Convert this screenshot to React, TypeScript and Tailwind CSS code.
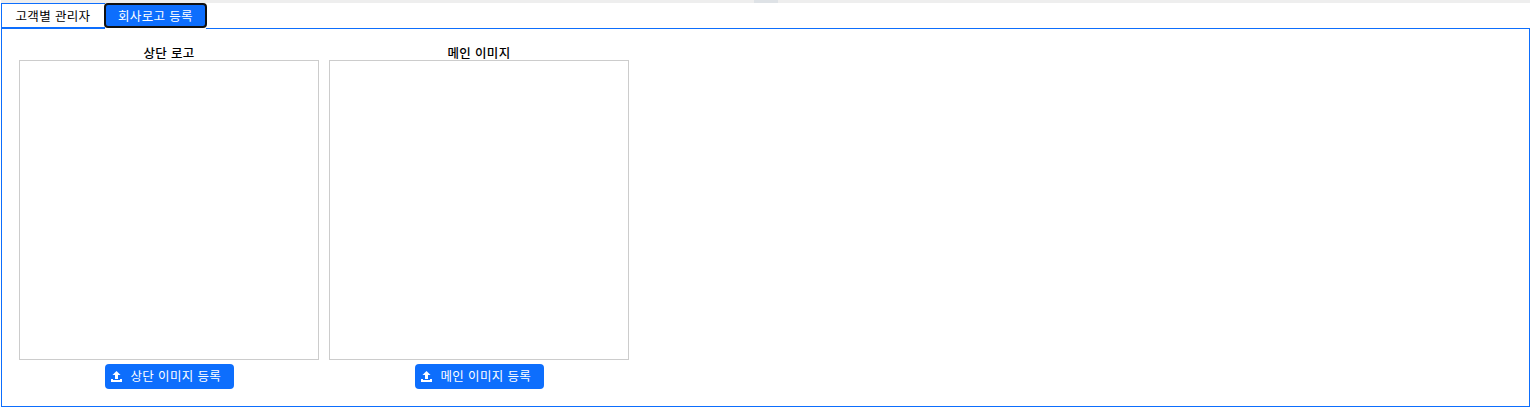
function UploadIcon() {
  return (
    <svg width="11" height="11" viewBox="0 0 11 11" fill="currentColor" className="shrink-0" aria-hidden="true">
      <path d="M5.5 0 9.5 4H7v4H4V4H1.5z" />
      <path d="M0 8h2v1h7V8h2v3H0z" />
    </svg>
  );
}

function ImageSlot({ title, action }: { title: string; action: string }) {
  return (
    <section className="flex w-[300px] flex-col items-center">
      <h2 className="h-[15px] whitespace-nowrap text-[12.5px] leading-[15px] font-medium tracking-[0.3px] [word-spacing:0.8px] text-black">{title}</h2>
      <div className="h-[300px] w-full border border-[#cccccc]" />
      <button className="mt-1 flex h-[25px] w-[129px] items-center gap-[9px] rounded-[4px] bg-[#0d6efd] pl-[6px] text-white">
        <UploadIcon />
        <span className="-mt-0.5 whitespace-nowrap text-[12.5px] leading-[16px] tracking-[0.35px] [word-spacing:0.7px]">{action}</span>
      </button>
    </section>
  );
}

export default function App() {
  return (
    <main className="h-[412px] w-full overflow-hidden bg-white pr-[5px] pl-px font-['Noto_Sans_CJK_KR',sans-serif] text-[12.5px] text-black">
      <div className="flex h-[3px] justify-center bg-[#eeeeee] pl-px">
        <div className="h-[3px] w-6 bg-[#dee2e6]" />
      </div>
      <div className="flex h-[26px]">
        <button className="h-[26px] w-[104px] border-t border-b-2 border-l border-[#0d6efd] pr-px whitespace-nowrap leading-[22px] tracking-[0.35px] [word-spacing:0.7px]">
          고객별 관리자
        </button>
        <button className="-ml-px h-[25px] w-[103px] rounded-[4px] border-2 border-[#101010] bg-[#0d6efd] whitespace-nowrap leading-[20px] tracking-[0.35px] [word-spacing:0.7px] text-white">
          회사로고 등록
        </button>
        <div className="-ml-px flex-1 border-b border-[#0d6efd]" />
      </div>
      <div className="flex h-[378px] gap-[10px] border-x border-b border-[#0d6efd] pt-[16px] pl-[17px]">
        <ImageSlot title="상단 로고" action="상단 이미지 등록" />
        <ImageSlot title="메인 이미지" action="메인 이미지 등록" />
      </div>
    </main>
  );
}
